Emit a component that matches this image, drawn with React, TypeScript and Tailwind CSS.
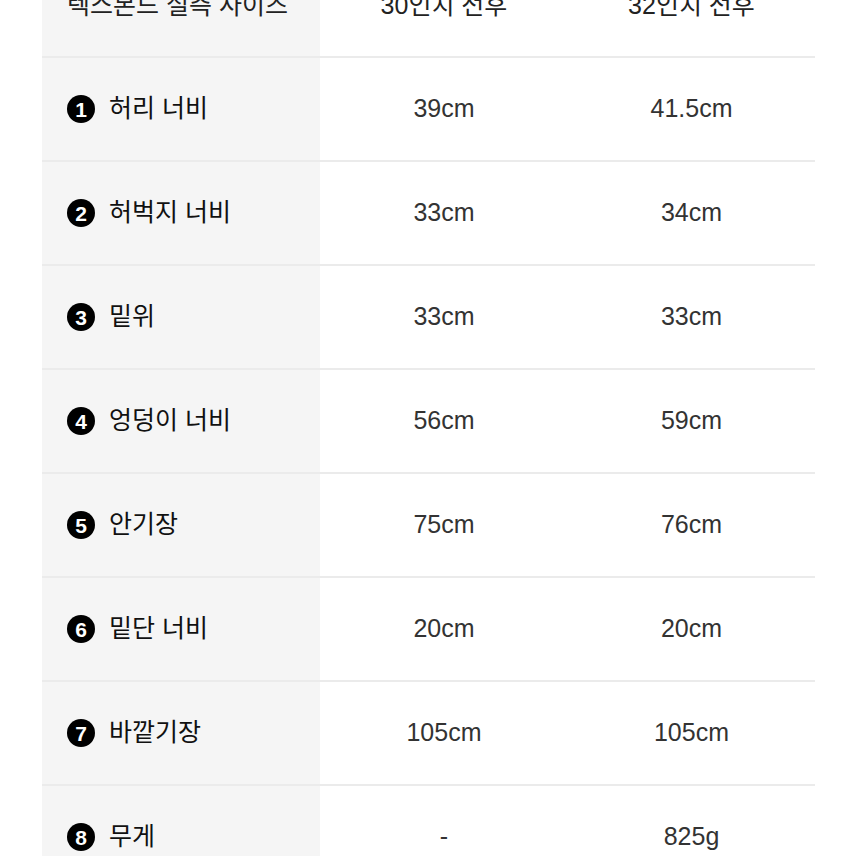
const rows: { label: string; a: string; b: string }[] = [
  { label: "허리 너비", a: "39cm", b: "41.5cm" },
  { label: "허벅지 너비", a: "33cm", b: "34cm" },
  { label: "밑위", a: "33cm", b: "33cm" },
  { label: "엉덩이 너비", a: "56cm", b: "59cm" },
  { label: "안기장", a: "75cm", b: "76cm" },
  { label: "밑단 너비", a: "20cm", b: "20cm" },
  { label: "바깥기장", a: "105cm", b: "105cm" },
  { label: "무게", a: "-", b: "825g" },
];

const font = "font-['Liberation_Sans','Noto_Sans_CJK_KR',sans-serif]";

export default function App() {
  return (
    <div className={`h-[856px] w-[856px] overflow-hidden bg-white ${font}`}>
      <div className="ml-[42px] mt-[-46px] w-[773px]">
        {/* header, scrolled partly out of view */}
        <div className="grid h-[104px] grid-cols-[278px_248px_247px] border-b-2 border-[#ebebeb] text-[25px] text-[#222]">
          <div className="flex items-center bg-[#f5f5f5] pl-[25px] pt-[2px]">텍스본드 실측 사이즈</div>
          <div className="flex items-center justify-center pt-[2px]">30인치 전후</div>
          <div className="flex items-center justify-center pt-[2px]">32인치 전후</div>
        </div>

        {rows.map((r, i) => (
          <div
            key={r.label}
            className="grid h-[104px] grid-cols-[278px_248px_247px] border-b-2 border-[#ebebeb]"
          >
            <div className="flex items-center gap-[14px] bg-[#f5f5f5] pl-[25px]">
              <span className="flex h-[28px] w-[28px] items-center justify-center rounded-full bg-black text-[21px] font-semibold leading-none text-white">
                {i + 1}
              </span>
              <span className="text-[25px] text-[#111]">{r.label}</span>
            </div>
            <div className="flex items-center justify-center text-[25px] text-[#333]">{r.a}</div>
            <div className="flex items-center justify-center text-[25px] text-[#333]">{r.b}</div>
          </div>
        ))}
      </div>
    </div>
  );
}
